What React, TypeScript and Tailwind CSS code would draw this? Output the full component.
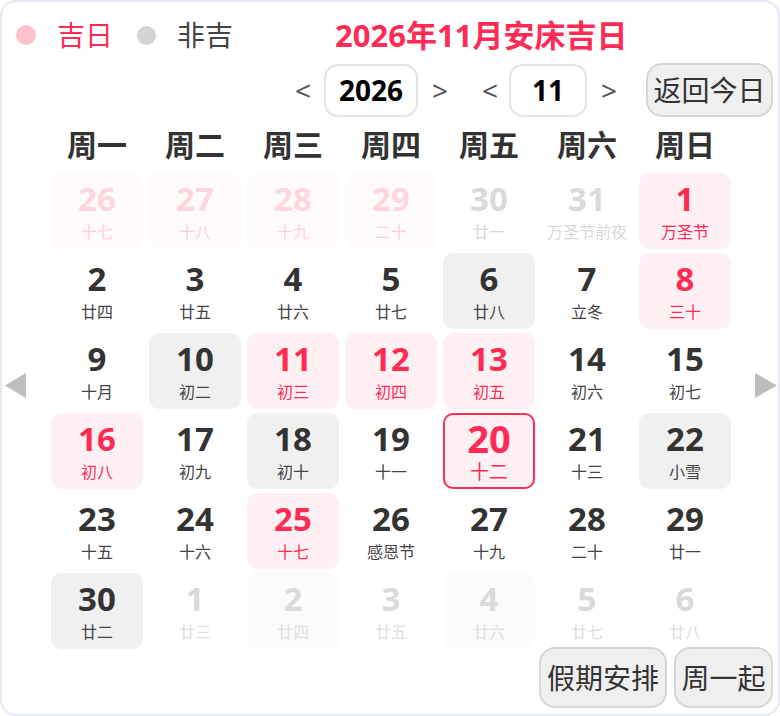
import React from "react";

type Kind = "normal" | "gray" | "red" | "prevPink" | "prevGray" | "next" | "nextBg" | "today";
type Cell = { d: string; l: string; k: Kind };

const rows: Cell[][] = [
  [
    { d: "26", l: "十七", k: "prevPink" },
    { d: "27", l: "十八", k: "prevPink" },
    { d: "28", l: "十九", k: "prevPink" },
    { d: "29", l: "二十", k: "prevPink" },
    { d: "30", l: "廿一", k: "prevGray" },
    { d: "31", l: "万圣节前夜", k: "prevGray" },
    { d: "1", l: "万圣节", k: "red" },
  ],
  [
    { d: "2", l: "廿四", k: "normal" },
    { d: "3", l: "廿五", k: "normal" },
    { d: "4", l: "廿六", k: "normal" },
    { d: "5", l: "廿七", k: "normal" },
    { d: "6", l: "廿八", k: "gray" },
    { d: "7", l: "立冬", k: "normal" },
    { d: "8", l: "三十", k: "red" },
  ],
  [
    { d: "9", l: "十月", k: "normal" },
    { d: "10", l: "初二", k: "gray" },
    { d: "11", l: "初三", k: "red" },
    { d: "12", l: "初四", k: "red" },
    { d: "13", l: "初五", k: "red" },
    { d: "14", l: "初六", k: "normal" },
    { d: "15", l: "初七", k: "normal" },
  ],
  [
    { d: "16", l: "初八", k: "red" },
    { d: "17", l: "初九", k: "normal" },
    { d: "18", l: "初十", k: "gray" },
    { d: "19", l: "十一", k: "normal" },
    { d: "20", l: "十二", k: "today" },
    { d: "21", l: "十三", k: "normal" },
    { d: "22", l: "小雪", k: "gray" },
  ],
  [
    { d: "23", l: "十五", k: "normal" },
    { d: "24", l: "十六", k: "normal" },
    { d: "25", l: "十七", k: "red" },
    { d: "26", l: "感恩节", k: "normal" },
    { d: "27", l: "十九", k: "normal" },
    { d: "28", l: "二十", k: "normal" },
    { d: "29", l: "廿一", k: "normal" },
  ],
  [
    { d: "30", l: "廿二", k: "gray" },
    { d: "1", l: "廿三", k: "next" },
    { d: "2", l: "廿四", k: "nextBg" },
    { d: "3", l: "廿五", k: "next" },
    { d: "4", l: "廿六", k: "nextBg" },
    { d: "5", l: "廿七", k: "next" },
    { d: "6", l: "廿八", k: "next" },
  ],
];

const cellBox: Record<Kind, string> = {
  normal: "",
  gray: "bg-[#f0f0f0]",
  red: "bg-[#fff0f3]",
  prevPink: "bg-[#fffafb]",
  prevGray: "",
  next: "",
  nextBg: "bg-[#fbfbfb]",
  today: "bg-[#fff0f3] border-2 border-[#fe2c55]",
};
const numCls: Record<Kind, string> = {
  normal: "text-[#333333]",
  gray: "text-[#333333]",
  red: "text-[#fe2c55]",
  prevPink: "text-[#ffd6de]",
  prevGray: "text-[#dadada]",
  next: "text-[#dadada]",
  nextBg: "text-[#dadada]",
  today: "text-[#fe2c55]",
};
const lunCls: Record<Kind, string> = {
  normal: "text-[#444444]",
  gray: "text-[#444444]",
  red: "text-[#fe2c55]",
  prevPink: "text-[#ffd0da]",
  prevGray: "text-[#d9d9d9]",
  next: "text-[#e0e0e0]",
  nextBg: "text-[#e0e0e0]",
  today: "text-[#fe2c55]",
};

function DayCell({ c }: { c: Cell }) {
  const today = c.k === "today";
  return (
    <div className={`h-[76px] rounded-[10px] flex flex-col items-center ${cellBox[c.k]} ${today ? "pt-[4px]" : "pt-[8px]"}`}>
      <div className={`font-bold ${today ? "text-[38px] leading-[38px]" : "text-[33px] leading-[36px]"} ${numCls[c.k]}`}>{c.d}</div>
      <div className={`whitespace-nowrap ${today ? "text-[19px] leading-[20px] mt-[5px]" : "text-[16px] leading-[20px] mt-[5px]"} ${lunCls[c.k]}`}>{c.l}</div>
    </div>
  );
}

const weekdays = ["周一", "周二", "周三", "周四", "周五", "周六", "周日"];

export default function App() {
  return (
    <div className="w-[780px] h-[716px] bg-white font-['Noto_Sans','Noto_Sans_CJK_SC',sans-serif]">
      <div className="relative w-[780px] h-[716px] border-2 border-[#e6e9f4] rounded-[16px] bg-white">
        {/* top row */}
        <div className="flex items-center h-[46px] mt-[10px] pl-[14px]">
          <span className="w-[20px] h-[20px] rounded-full bg-[#ffc2cc]" />
          <span className="ml-[21px] text-[28px] leading-[46px] text-[#fe2c55]">吉日</span>
          <span className="ml-[24px] w-[19px] h-[19px] rounded-full bg-[#d4d4d4]" />
          <span className="ml-[21px] text-[28px] leading-[46px] text-[#444444]">非吉</span>
          <span className="ml-[102px] text-[31px] leading-[46px] font-bold text-[#fe2c55]">2026年11月安床吉日</span>
        </div>
        {/* controls */}
        <div className="flex items-center justify-end h-[54px] mt-[5px] pr-[5px]">
          <span className="w-[14px] text-center text-[28px] text-[#555555] leading-none">&lt;</span>
          <div className="ml-[15px] w-[94px] h-[53px] border-2 border-[#e3e3e3] rounded-[14px] flex items-center justify-center text-[28px] font-bold text-black">2026</div>
          <span className="ml-[14px] w-[14px] text-center text-[28px] text-[#555555] leading-none">&gt;</span>
          <span className="ml-[36px] w-[14px] text-center text-[28px] text-[#555555] leading-none">&lt;</span>
          <div className="ml-[13px] w-[78px] h-[53px] border-2 border-[#e3e3e3] rounded-[14px] flex items-center justify-center text-[28px] font-bold text-black">11</div>
          <span className="ml-[14px] w-[14px] text-center text-[28px] text-[#555555] leading-none">&gt;</span>
          <div className="ml-[31px] w-[127px] h-[54px] bg-[#efefef] border-2 border-[#d6d6d6] rounded-[16px] flex items-center justify-center text-[28px] text-[#333333]">返回今日</div>
        </div>
        {/* weekday header */}
        <div className="grid grid-cols-[repeat(7,92px)] gap-x-[6px] ml-[49px] h-[56px] items-center">
          {weekdays.map((w) => (
            <div key={w} className="text-center text-[30px] font-bold text-[#333333] leading-[40px]">{w}</div>
          ))}
        </div>
        {/* grid */}
        <div className="grid grid-cols-[repeat(7,92px)] gap-x-[6px] gap-y-[4px] ml-[49px]">
          {rows.flat().map((c, i) => (
            <DayCell key={i} c={c} />
          ))}
        </div>
        {/* bottom buttons */}
        <div className="flex justify-end gap-[7px] mt-[-2px] pr-[5px]">
          <div className="w-[128px] h-[61px] bg-[#efefef] border-2 border-[#d6d6d6] rounded-[16px] flex items-center justify-center text-[28px] text-[#333333]">假期安排</div>
          <div className="w-[99px] h-[61px] bg-[#efefef] border-2 border-[#d6d6d6] rounded-[16px] flex items-center justify-center text-[28px] text-[#333333]">周一起</div>
        </div>
        {/* side arrows */}
        <svg className="absolute left-[3px] top-[371px]" width="22" height="25" viewBox="0 0 22 25">
          <polygon points="21,0 21,25 0,12.5" fill="#bdbdbd" />
        </svg>
        <svg className="absolute left-[753px] top-[371px]" width="22" height="25" viewBox="0 0 22 25">
          <polygon points="0,0 0,25 22,12.5" fill="#bdbdbd" />
        </svg>
      </div>
    </div>
  );
}
